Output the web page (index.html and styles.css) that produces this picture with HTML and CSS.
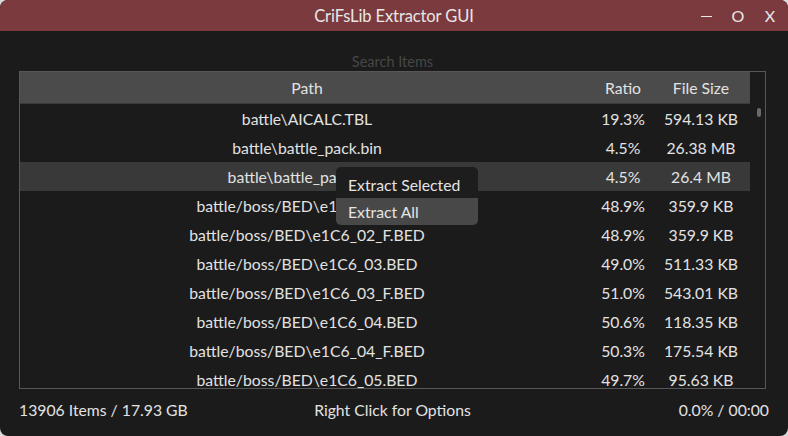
FILE: index.html
```html
<!DOCTYPE html>
<html>
<head>
<meta charset="utf-8">
<link rel="stylesheet" href="styles.css">
</head>
<body>
<div class="window">
  <div class="titlebar">
    <div></div>
    <div class="title">CriFsLib Extractor GUI</div>
    <div class="controls"><span class="ctl"><span class="dash"></span></span><span class="ctl">O</span><span class="ctl">X</span></div>
  </div>
  <div class="content">
    <div class="search">Search Items</div>
    <div class="table">
      <div class="list">
        <div class="row header"><div class="c-path">Path</div><div class="c-ratio">Ratio</div><div class="c-size">File Size</div></div>
        <div class="rows">
          <div class="row"><div class="c-path">battle\AICALC.TBL</div><div class="c-ratio">19.3%</div><div class="c-size">594.13 KB</div></div>
          <div class="row"><div class="c-path">battle\battle_pack.bin</div><div class="c-ratio">4.5%</div><div class="c-size">26.38 MB</div></div>
          <div class="row selected"><div class="c-path">battle\battle_pack2.bin</div><div class="c-ratio">4.5%</div><div class="c-size">26.4 MB</div></div>
          <div class="row"><div class="c-path">battle/boss/BED\e1C6_02.BED</div><div class="c-ratio">48.9%</div><div class="c-size">359.9 KB</div></div>
          <div class="row"><div class="c-path">battle/boss/BED\e1C6_02_F.BED</div><div class="c-ratio">48.9%</div><div class="c-size">359.9 KB</div></div>
          <div class="row"><div class="c-path">battle/boss/BED\e1C6_03.BED</div><div class="c-ratio">49.0%</div><div class="c-size">511.33 KB</div></div>
          <div class="row"><div class="c-path">battle/boss/BED\e1C6_03_F.BED</div><div class="c-ratio">51.0%</div><div class="c-size">543.01 KB</div></div>
          <div class="row"><div class="c-path">battle/boss/BED\e1C6_04.BED</div><div class="c-ratio">50.6%</div><div class="c-size">118.35 KB</div></div>
          <div class="row"><div class="c-path">battle/boss/BED\e1C6_04_F.BED</div><div class="c-ratio">50.3%</div><div class="c-size">175.54 KB</div></div>
          <div class="row"><div class="c-path">battle/boss/BED\e1C6_05.BED</div><div class="c-ratio">49.7%</div><div class="c-size">95.63 KB</div></div>
        </div>
      </div>
      <div class="scrollbar"><div class="thumb"></div></div>
      <div class="menu">
        <div class="menu-item">Extract Selected</div>
        <div class="menu-item active">Extract All</div>
      </div>
    </div>
    <div class="footer">
      <div class="f-left">13906 Items / 17.93 GB</div>
      <div class="f-mid">Right Click for Options</div>
      <div class="f-right">0.0% / 00:00</div>
    </div>
  </div>
</div>
</body>
</html>
```
FILE: styles.css
```css
html, body {
  margin: 0;
  padding: 0;
  background: #d9d9d9;
}
body {
  font-family: Lato, "Noto Sans", sans-serif;
  color: #e2e2e2;
}
.window {
  width: 788px;
  height: 436px;
  background: #1b1b1b;
  border-radius: 8px;
  overflow: hidden;
  display: flex;
  flex-direction: column;
}
.titlebar {
  height: 31px;
  flex: none;
  background: #7b3a3d;
  display: grid;
  grid-template-columns: 1fr auto 1fr;
  align-items: center;
}
.title {
  font-size: 16.5px;
  color: #e8e8e8;
  letter-spacing: -0.1px;
}
.controls {
  display: flex;
  justify-content: flex-end;
  align-items: center;
  gap: 16px;
  padding-right: 10px;
  font-size: 16px;
  color: #e8e8e8;
}
.ctl {
  width: 16px;
  display: flex;
  justify-content: center;
  align-items: center;
}
.dash {
  display: block;
  width: 11px;
  height: 1.5px;
  background: #e8e8e8;
  margin-top: 2px;
}
.content {
  flex: 1;
  display: flex;
  flex-direction: column;
  padding: 0 22px 0 19px;
  min-height: 0;
}
.search {
  margin-top: 21px;
  height: 19px;
  line-height: 19px;
  text-align: center;
  font-size: 14.5px;
  color: #474747;
}
.table {
  position: relative;
  height: 316px;
  border: 1px solid #575757;
  display: flex;
  flex: none;
}
.list {
  width: 730px;
  display: flex;
  flex-direction: column;
  overflow: hidden;
}
.row {
  display: flex;
  height: 29px;
  align-items: center;
  font-size: 15.75px;
  flex: none;
}
.row.header {
  height: 31px;
  background: #4b4b4b;
  border-bottom: 1px solid #3a3a3a;
}
.row.selected {
  background: #393939;
}
.c-path {
  width: 574px;
  text-align: center;
}
.c-ratio {
  width: 58px;
  text-align: center;
}
.c-size {
  width: 98px;
  text-align: center;
}
.rows {
  overflow: hidden;
}
.scrollbar {
  flex: 1;
  display: flex;
  justify-content: center;
  padding-top: 36px;
  padding-left: 3px;
}
.thumb {
  width: 4px;
  height: 9px;
  border-radius: 2px;
  background: #6a6a6a;
}
.menu {
  position: absolute;
  left: 316px;
  top: 95px;
  width: 142px;
  background: #1d1d1d;
  border-radius: 5px;
  padding-top: 4px;
  overflow: hidden;
}
.menu-item {
  height: 27px;
  line-height: 27px;
  padding-left: 12px;
  font-size: 15.75px;
  color: #e4e4e4;
}
.menu-item.active {
  background: #484848;
}
.footer {
  flex: 1;
  display: grid;
  grid-template-columns: 1fr auto 1fr;
  align-items: start;
  padding-top: 11px;
  font-size: 15.75px;
  color: #e2e2e2;
}
.f-right {
  text-align: right;
  margin-right: -3px;
}
```
